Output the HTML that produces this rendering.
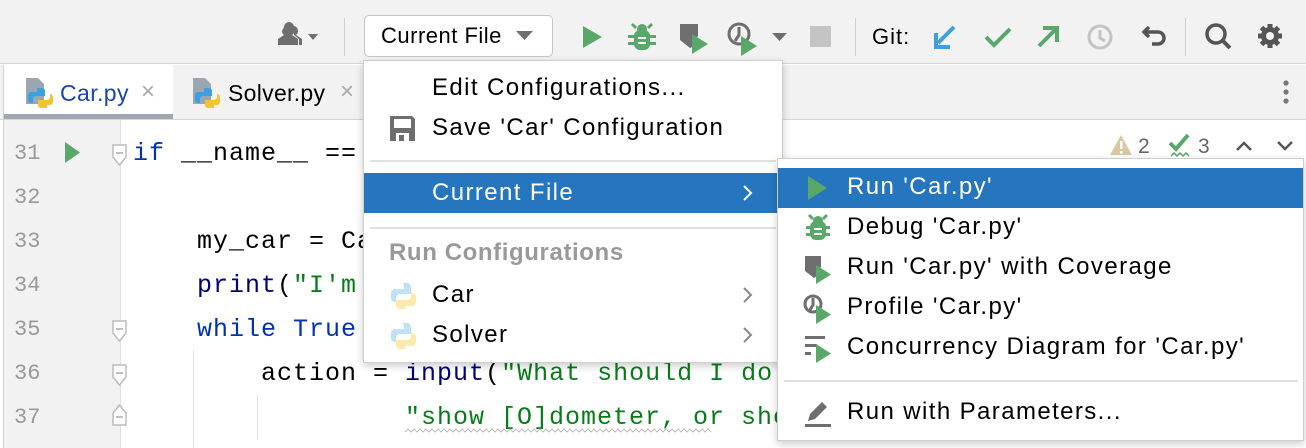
<!DOCTYPE html>
<html><head><meta charset="utf-8"><style>
*{margin:0;padding:0;box-sizing:border-box}
body{width:1306px;height:448px;overflow:hidden;background:#fff;font-family:"Liberation Sans",sans-serif;position:relative}
.a{position:absolute}
.t{position:absolute;font-size:24px;letter-spacing:1.4px;color:#000;white-space:nowrap;line-height:24px}
.code{position:absolute;font-family:"Liberation Mono",monospace;font-size:25px;letter-spacing:1px;white-space:pre;line-height:30px;color:#000}
.ln{position:absolute;left:14px;font-family:"Liberation Mono",monospace;font-size:22px;color:#999;line-height:30px}
.kw{color:#0033b3}.st{color:#067d17}.bi{color:#000080}
svg{position:absolute;overflow:visible}
</style></head><body>
<div class="a" style="left:0;top:0;width:1306px;height:64px;background:#f2f2f2;border-bottom:1px solid #d6d6d6"></div>
<svg style="left:276px;top:24px" width="40" height="26"><path d="M8 3a5 5 0 0 1 10 0v4a5 5 0 0 1-2 4l6 4v6H2v-6l6-4a5 5 0 0 1-2-4z" fill="#6e6e6e"/><path d="M16 2a5 5 0 0 1 6 5a5 5 0 0 1-2 4l6 4v6h-3v-6l-5-4" fill="#6e6e6e"/><path d="M32 10h10l-5 6z" fill="#6e6e6e"/></svg>
<div class="a" style="left:344px;top:18px;width:1px;height:38px;background:#cfcfcf"></div>
<div class="a" style="left:364px;top:15px;width:189px;height:42px;border:1px solid #c4c4c4;border-radius:5px;background:#fff"></div>
<div class="t" style="left:381px;top:24px;font-size:22px;letter-spacing:0.5px">Current File</div>
<svg style="left:516px;top:31px" width="18" height="10"><path d="M0 0h17l-8.5 9z" fill="#6e6e6e"/></svg>
<svg style="left:582px;top:25px" width="20" height="24"><path d="M1 1l19 11L1 23z" fill="#59a869"/></svg>
<svg style="left:628px;top:22px" width="28" height="30"><g fill="#59a869"><rect x="6" y="8" width="16" height="20" rx="6"/><circle cx="14" cy="7" r="5"/><path d="M4 2l4 4M24 2l-4 4" stroke="#59a869" stroke-width="3"/><rect x="0" y="13" width="28" height="3"/><rect x="0" y="20" width="28" height="3"/></g><rect x="10" y="15" width="8" height="2" fill="#fff"/><rect x="10" y="20" width="8" height="2" fill="#fff"/></svg>
<svg style="left:678px;top:22px" width="32" height="32"><path d="M2 2h18v12l-4 4v6l-4 2-10-8z" fill="#6e6e6e"/><path d="M14 12l16 10-16 10z" fill="#59a869"/></svg>
<svg style="left:727px;top:22px" width="34" height="34"><circle cx="12" cy="12" r="10" fill="none" stroke="#6e6e6e" stroke-width="3"/><path d="M12 5v8l-4 6" stroke="#6e6e6e" stroke-width="3" fill="none"/><path d="M14 14l16 10-16 10z" fill="#59a869"/></svg>
<svg style="left:772px;top:33px" width="16" height="10"><path d="M0 0h15l-7.5 8z" fill="#6e6e6e"/></svg>
<div class="a" style="left:810px;top:26px;width:21px;height:21px;background:#c4c4c4"></div>
<div class="a" style="left:855px;top:18px;width:1px;height:38px;background:#cfcfcf"></div>
<div class="t" style="left:872px;top:25px;font-size:22px;letter-spacing:1px">Git:</div>
<svg style="left:932px;top:24px" width="26" height="26"><path d="M22 3L6 19M4 9v14h14" stroke="#3d9fe0" stroke-width="4" fill="none"/></svg>
<svg style="left:984px;top:26px" width="28" height="22"><path d="M2 11l8 8L26 3" stroke="#59a869" stroke-width="4" fill="none"/></svg>
<svg style="left:1035px;top:24px" width="26" height="26"><path d="M4 22L20 6M8 4h14v14" stroke="#59a869" stroke-width="4" fill="none"/></svg>
<svg style="left:1087px;top:24px" width="28" height="28"><circle cx="13" cy="13" r="11" fill="none" stroke="#c4c4c4" stroke-width="3"/><path d="M13 6v8l5 3" stroke="#c4c4c4" stroke-width="3" fill="none"/></svg>
<svg style="left:1140px;top:24px" width="28" height="28"><path d="M4 8h14a6 6 0 0 1 0 12h-6M9 3L4 8l5 5" stroke="#555" stroke-width="3.5" fill="none"/></svg>
<div class="a" style="left:1185px;top:18px;width:1px;height:38px;background:#cfcfcf"></div>
<svg style="left:1204px;top:22px" width="30" height="30"><circle cx="12" cy="12" r="9" fill="none" stroke="#555" stroke-width="3.5"/><path d="M18 18l8 8" stroke="#555" stroke-width="4"/></svg>
<svg style="left:1257px;top:23px" width="28" height="28"><g fill="#555"><circle cx="13" cy="13" r="9"/><g stroke="#555" stroke-width="5"><path d="M13 1v24M1 13h24M4.5 4.5l17 17M21.5 4.5l-17 17"/></g></g><circle cx="13" cy="13" r="4" fill="#f2f2f2"/></svg>
<div class="a" style="left:0;top:65px;width:1306px;height:55px;background:#f2f2f2;border-bottom:1px solid #d6d6d6"></div>
<div class="a" style="left:3px;top:65px;width:170px;height:54px;background:#fff"></div>
<div class="a" style="left:3px;top:114px;width:170px;height:5px;background:#a0a7b4"></div>
<div class="a" style="left:3px;top:65px;width:1px;height:383px;background:#d0d0d0"></div>
<svg style="left:26px;top:78px" width="28" height="32"><path d="M0 0h12l6 6v20H0z" fill="#9aa7b0"/><path d="M11 10h5a3 3 0 0 1 3 3v5h-9a3 3 0 0 0-3 3v4H5a3 3 0 0 1-3-3v-5a3 3 0 0 1 3-3h6z" fill="#3d9fe0"/><path d="M21 30h-6a3 3 0 0 1-3-3v-5h9a3 3 0 0 0 3-3v-3h0a3 3 0 0 1 3 3v5a3 3 0 0 1-3 3h-3z" fill="#f4c430"/></svg>
<div class="t" style="left:60px;top:81px;color:#1a45a8;font-size:23px;letter-spacing:0.4px">Car.py</div>
<div class="t" style="left:141px;top:80px;color:#aaa;font-size:24px;letter-spacing:0">×</div>
<svg style="left:193px;top:78px" width="28" height="32"><path d="M0 0h12l6 6v20H0z" fill="#9aa7b0"/><path d="M11 10h5a3 3 0 0 1 3 3v5h-9a3 3 0 0 0-3 3v4H5a3 3 0 0 1-3-3v-5a3 3 0 0 1 3-3h6z" fill="#3d9fe0"/><path d="M21 30h-6a3 3 0 0 1-3-3v-5h9a3 3 0 0 0 3-3v-3h0a3 3 0 0 1 3 3v5a3 3 0 0 1-3 3h-3z" fill="#f4c430"/></svg>
<div class="t" style="left:228px;top:81px;font-size:23px;letter-spacing:0.3px">Solver.py</div>
<div class="t" style="left:340px;top:80px;color:#aaa;font-size:24px;letter-spacing:0">×</div>
<svg style="left:1282px;top:80px" width="8" height="26"><circle cx="4" cy="3" r="2.6" fill="#777"/><circle cx="4" cy="12" r="2.6" fill="#777"/><circle cx="4" cy="21" r="2.6" fill="#777"/></svg>
<div class="a" style="left:4px;top:120px;width:116px;height:328px;background:#f2f2f2"></div>
<div class="a" style="left:120px;top:120px;width:1px;height:328px;background:#e0e0e0"></div>
<div class="ln" style="top:139px">31</div><div class="ln" style="top:183px">32</div><div class="ln" style="top:227px">33</div><div class="ln" style="top:271px">34</div><div class="ln" style="top:315px">35</div><div class="ln" style="top:359px">36</div><div class="ln" style="top:403px">37</div>
<svg style="left:65px;top:142px" width="16" height="22"><path d="M0 0l15 10.5L0 21z" fill="#59a869"/></svg>
<svg style="left:112px;top:144px" width="16" height="24"><path d="M1 1h13v12l-6.5 8L1 13z" fill="#fff" stroke="#bbb" stroke-width="1.5"/><path d="M4 9h7" stroke="#aaa" stroke-width="1.5"/></svg>
<svg style="left:112px;top:320px" width="16" height="24"><path d="M1 1h13v12l-6.5 8L1 13z" fill="#fff" stroke="#bbb" stroke-width="1.5"/><path d="M4 9h7" stroke="#aaa" stroke-width="1.5"/></svg>
<svg style="left:112px;top:364px" width="16" height="24"><path d="M1 1h13v12l-6.5 8L1 13z" fill="#fff" stroke="#bbb" stroke-width="1.5"/><path d="M4 9h7" stroke="#aaa" stroke-width="1.5"/></svg>
<svg style="left:112px;top:402px" width="16" height="24"><path d="M1 23h13V11L7.5 3 1 11z" fill="#fff" stroke="#bbb" stroke-width="1.5"/><path d="M4 15h7" stroke="#aaa" stroke-width="1.5"/></svg>
<div class="a" style="left:193px;top:350px;width:1px;height:98px;background:#e3e3e3"></div>
<div class="a" style="left:257px;top:395px;width:1px;height:45px;background:#e3e3e3"></div>
<div class="code" style="left:133px;top:139px"><span class="kw">if</span> __name__ ==</div>
<div class="code" style="left:197px;top:227px">my_car = Ca</div>
<div class="code" style="left:197px;top:271px"><span class="bi">print</span>(<span class="st">"I'm</span></div>
<div class="code" style="left:197px;top:315px"><span class="kw">while True</span>:</div>
<div class="code" style="left:261px;top:359px">action = <span class="bi">input</span>(<span class="st">"What should I do</span></div>
<div class="code" style="left:405px;top:403px"><span class="st">"show [O]dometer, or sho</span></div>
<svg style="left:405px;top:429px" width="380" height="4"><path d="M0 3l3-3 3 3 3-3 3 3 3-3 3 3 3-3 3 3 3-3 3 3 3-3 3 3 3-3 3 3 3-3 3 3 3-3 3 3 3-3 3 3 3-3 3 3 3-3 3 3 3-3 3 3 3-3 3 3 3-3 3 3 3-3 3 3 3-3 3 3 3-3 3 3 3-3 3 3 3-3 3 3 3-3 3 3 3-3 3 3 3-3 3 3 3-3 3 3 3-3 3 3 3-3 3 3 3-3 3 3 3-3 3 3 3-3 3 3 3-3 3 3 3-3 3 3 3-3 3 3 3-3 3 3 3-3 3 3 3-3 3 3 3-3 3 3 3-3 3 3 3-3 3 3 3-3 3 3 3-3 3 3 3-3 3 3 3-3 3 3 3-3 3 3 3-3 3 3 3-3 3 3 3-3 3 3 3-3 3 3 3-3 3 3 3-3 3 3 3-3 3 3 3-3 3 3" stroke="#bbb" fill="none"/></svg>
<svg style="left:1110px;top:134px" width="24" height="22"><path d="M11 1L22 21H0z" fill="#d8c9a3"/><rect x="10" y="7" width="2.5" height="8" fill="#fff"/><rect x="10" y="17" width="2.5" height="2.5" fill="#fff"/></svg>
<div class="t" style="left:1138px;top:135px;color:#666;font-size:21px;letter-spacing:0">2</div>
<svg style="left:1168px;top:134px" width="26" height="26"><path d="M2 9l6 6L20 1" stroke="#59a869" stroke-width="4" fill="none"/><path d="M3 22l3-3 3 3 3-3 3 3 3-3 3 3" stroke="#59a869" stroke-width="1.5" fill="none"/></svg>
<div class="t" style="left:1198px;top:135px;color:#666;font-size:21px;letter-spacing:0">3</div>
<svg style="left:1235px;top:140px" width="18" height="12"><path d="M2 10l7-7 7 7" stroke="#555" stroke-width="2.5" fill="none"/></svg>
<svg style="left:1276px;top:140px" width="18" height="12"><path d="M2 2l7 7 7-7" stroke="#555" stroke-width="2.5" fill="none"/></svg>
<div class="a" style="left:363px;top:60px;width:420px;height:303px;background:#fff;border:1px solid #cfcfcf;box-shadow:0 3px 8px rgba(0,0,0,.2)"></div>
<div class="t" style="left:432px;top:76px">Edit Configurations...</div>
<svg style="left:390px;top:116px" width="26" height="26"><path d="M0 0h22l3 3v22H0z" fill="#6e6e6e"/><rect x="4" y="3" width="17" height="9" fill="#fff"/><rect x="6" y="17" width="13" height="8" fill="#fff"/><rect x="9" y="19" width="5" height="6" fill="#6e6e6e"/></svg>
<div class="t" style="left:432px;top:116px">Save 'Car' Configuration</div>
<div class="a" style="left:370px;top:160px;width:406px;height:2px;background:#e0e0e0"></div>
<div class="a" style="left:364px;top:173px;width:418px;height:40px;background:#2675bf"></div>
<div class="t" style="left:432px;top:181px;color:#fff">Current File</div>
<svg style="left:742px;top:184px" width="12" height="18"><path d="M2 2l7 7-7 7" stroke="#fff" stroke-width="2" fill="none"/></svg>
<div class="a" style="left:370px;top:227px;width:406px;height:2px;background:#e0e0e0"></div>
<div class="t" style="left:389px;top:241px;color:#999;font-weight:bold;letter-spacing:0.6px">Run Configurations</div>
<svg style="left:390px;top:282px" width="28" height="28"><path d="M12 1h5a4 4 0 0 1 4 4v7H10a4 4 0 0 0-4 4v4H5a4 4 0 0 1-4-4v-5a4 4 0 0 1 4-4h9V5a4 4 0 0 0-2-4z" fill="#bfe0f5"/><path d="M15 27h-5a4 4 0 0 1-4-4v-5h11a4 4 0 0 0 4-4v-3h1a4 4 0 0 1 4 4v5a4 4 0 0 1-4 4h-7z" fill="#fbeaaa"/></svg>
<div class="t" style="left:432px;top:283px">Car</div>
<svg style="left:742px;top:286px" width="12" height="18"><path d="M2 2l7 7-7 7" stroke="#888" stroke-width="2" fill="none"/></svg>
<svg style="left:390px;top:322px" width="28" height="28"><path d="M12 1h5a4 4 0 0 1 4 4v7H10a4 4 0 0 0-4 4v4H5a4 4 0 0 1-4-4v-5a4 4 0 0 1 4-4h9V5a4 4 0 0 0-2-4z" fill="#bfe0f5"/><path d="M15 27h-5a4 4 0 0 1-4-4v-5h11a4 4 0 0 0 4-4v-3h1a4 4 0 0 1 4 4v5a4 4 0 0 1-4 4h-7z" fill="#fbeaaa"/></svg>
<div class="t" style="left:432px;top:323px">Solver</div>
<svg style="left:742px;top:326px" width="12" height="18"><path d="M2 2l7 7-7 7" stroke="#888" stroke-width="2" fill="none"/></svg>
<div class="a" style="left:777px;top:158px;width:527px;height:283px;background:#fff;border:1px solid #cfcfcf;box-shadow:0 3px 8px rgba(0,0,0,.2)"></div>
<div class="a" style="left:778px;top:168px;width:525px;height:40px;background:#2675bf"></div>
<svg style="left:808px;top:176px" width="20" height="24"><path d="M0 0l19 12L0 24z" fill="#59a869"/></svg>
<div class="t" style="left:847px;top:175px;color:#fff">Run 'Car.py'</div>
<svg style="left:805px;top:214px" width="26" height="28"><g fill="#59a869"><rect x="5" y="7" width="16" height="19" rx="6"/><circle cx="13" cy="7" r="5"/><path d="M4 1l4 4M22 1l-4 4" stroke="#59a869" stroke-width="3"/><rect x="1" y="12" width="24" height="3"/><rect x="1" y="19" width="24" height="3"/></g><rect x="9" y="14" width="8" height="2" fill="#fff"/><rect x="9" y="19" width="8" height="2" fill="#fff"/></svg>
<div class="t" style="left:847px;top:215px">Debug 'Car.py'</div>
<svg style="left:803px;top:254px" width="30" height="30"><path d="M2 2h16v11l-4 4v5l-3 2-9-7z" fill="#6e6e6e"/><path d="M13 11l15 9.5-15 9.5z" fill="#59a869"/></svg>
<div class="t" style="left:847px;top:255px">Run 'Car.py' with Coverage</div>
<svg style="left:803px;top:294px" width="30" height="30"><circle cx="10" cy="10" r="8" fill="none" stroke="#6e6e6e" stroke-width="3"/><path d="M10 4v7l-3 5" stroke="#6e6e6e" stroke-width="3" fill="none"/><path d="M13 11l15 9.5-15 9.5z" fill="#59a869"/></svg>
<div class="t" style="left:847px;top:295px">Profile 'Car.py'</div>
<svg style="left:803px;top:336px" width="30" height="30"><rect x="2" y="0" width="20" height="3" fill="#6e6e6e"/><rect x="2" y="8" width="12" height="3" fill="#6e6e6e"/><rect x="2" y="16" width="6" height="3" fill="#6e6e6e"/><path d="M13 8l15 9.5-15 9.5z" fill="#59a869"/></svg>
<div class="t" style="left:847px;top:335px">Concurrency Diagram for 'Car.py'</div>
<div class="a" style="left:784px;top:380px;width:514px;height:2px;background:#e0e0e0"></div>
<svg style="left:803px;top:399px" width="30" height="30"><path d="M5 22l2-7 12-12 5 5-12 12z" fill="#6e6e6e"/><rect x="2" y="25" width="26" height="3" fill="#6e6e6e"/></svg>
<div class="t" style="left:847px;top:400px">Run with Parameters...</div>
</body></html>
